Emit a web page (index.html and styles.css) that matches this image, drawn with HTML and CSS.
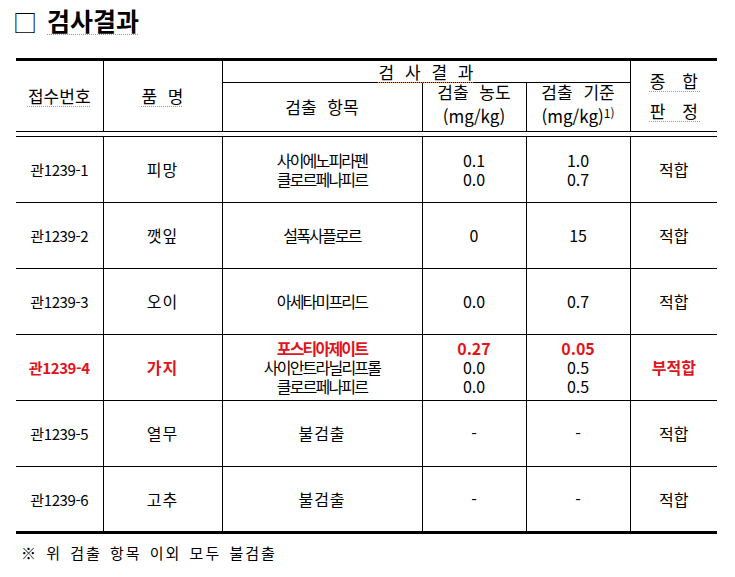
FILE: index.html
```html
<!DOCTYPE html>
<html lang="ko">
<head>
<meta charset="utf-8">
<title>검사결과</title>
<link rel="stylesheet" href="styles.css">
</head>
<body>
<h1 class="title"><span class="box">□</span><span class="sp">검사결과</span></h1>
<table class="result">
  <colgroup>
    <col class="c1"><col class="c2"><col class="c3"><col class="c4"><col class="c5"><col class="c6">
  </colgroup>
  <thead>
    <tr class="h1">
      <th rowspan="2" class="l"><span class="sp">접수번호</span></th>
      <th rowspan="2"><span class="sp">품 명</span></th>
      <th colspan="3" class="group"><span class="sp">검 사 결 과</span></th>
      <th rowspan="2" class="r judge"><span class="sp">종 합</span><br><span class="sp">판 정</span></th>
    </tr>
    <tr class="h2">
      <th>검출 항목</th>
      <th class="unit"><div class="lift">검출 농도<br>(mg/kg)</div></th>
      <th class="unit"><div class="lift">검출 기준<br>(mg/kg)<sup>1)</sup></div></th>
    </tr>
    <tr class="gap"><td colspan="6" class="l r"></td></tr>
  </thead>
  <tbody>
    <tr>
      <td class="l id">관1239-1</td><td class="name">피망</td>
      <td class="item">사이에노피라펜<br>클로르페나피르</td>
      <td class="val">0.1<br>0.0</td><td class="val">1.0<br>0.7</td>
      <td class="r ok">적합</td>
    </tr>
    <tr>
      <td class="l id">관1239-2</td><td class="name">깻잎</td>
      <td class="item">설폭사플로르</td>
      <td class="val">0</td><td class="val">15</td>
      <td class="r ok">적합</td>
    </tr>
    <tr>
      <td class="l id">관1239-3</td><td class="name">오이</td>
      <td class="item">아세타미프리드</td>
      <td class="val">0.0</td><td class="val">0.7</td>
      <td class="r ok">적합</td>
    </tr>
    <tr class="fail">
      <td class="l id red">관1239-4</td><td class="name red">가지</td>
      <td class="item"><span class="red">포스티아제이트</span><br>사이안트라닐리프롤<br>클로르페나피르</td>
      <td class="val"><span class="red">0.27</span><br>0.0<br>0.0</td>
      <td class="val"><span class="red">0.05</span><br>0.5<br>0.5</td>
      <td class="r ok red">부적합</td>
    </tr>
    <tr>
      <td class="l id">관1239-5</td><td class="name">열무</td>
      <td class="item wide">불검출</td>
      <td class="val">-</td><td class="val">-</td>
      <td class="r ok">적합</td>
    </tr>
    <tr>
      <td class="l id">관1239-6</td><td class="name">고추</td>
      <td class="item wide">불검출</td>
      <td class="val">-</td><td class="val">-</td>
      <td class="r ok">적합</td>
    </tr>
  </tbody>
</table>
<p class="note">※ 위 검출 항목 이외 모두 불검출</p>
</body>
</html>
```

FILE: styles.css
```css
* { box-sizing: border-box; }

body {
  margin: 0;
  background: #fff;
  color: #000;
  font-family: "Noto Sans CJK KR", "Noto Sans", sans-serif;
}

.title {
  margin: 0;
  height: 58px;
  padding: 5px 0 0 13px;
  display: flex;
  align-items: flex-start;
  gap: 10px;
  font-size: 25px;
  line-height: 31px;
  font-weight: 700;
  letter-spacing: 0;
}

.title .box {
  font-weight: 400;
  font-size: 24px;
  padding-top: 1px;
}

.sp {
  text-decoration: underline dotted #d98a3a;
  text-underline-offset: 3px;
  text-decoration-thickness: 1px;
}

.result {
  margin-left: 16px;
  width: 701px;
  border-collapse: collapse;
  table-layout: fixed;
}

.c1 { width: 87px; }
.c2 { width: 119px; }
.c3 { width: 200px; }
.c4 { width: 104px; }
.c5 { width: 104px; }
.c6 { width: 87px; }

.result th,
.result td {
  border: 1px solid #000;
  padding: 0;
  text-align: center;
  vertical-align: middle;
  font-weight: 400;
}

.result .l { border-left: none; }
.result .r { border-right: none; }

.result th {
  font-size: 17px;
  line-height: 20px;
  word-spacing: 6px;
}

.result .h1 th { border-top: 3px solid #000; }
.result .h1 { height: 23px; }
.result .h2 { height: 49px; }

.result th.group { line-height: 18px; }

.result th.judge {
  line-height: 30px;
  letter-spacing: 3px;
  word-spacing: 6px;
  padding-left: 3px;
}

.result th.unit {
  line-height: 24px;
}

.lift {
  margin-top: -6px;
}

.result th.unit sup {
  font-size: 12px;
  line-height: 0;
  vertical-align: 5px;
  letter-spacing: 0;
  word-spacing: 0;
}

.result .gap { height: 5px; }
.result .gap td { padding: 0; height: 5px; }

.result tbody tr { height: 66px; }
.result tbody tr:last-child td { border-bottom: 3px solid #000; }

.result td {
  font-size: 16px;
  line-height: 19px;
}

.result td.id {
  font-size: 15px;
  letter-spacing: -0.4px;
}

.result td.name { letter-spacing: 1px; }

.result td.item {
  font-size: 16px;
  letter-spacing: -1.8px;
}

.result td.item.wide { letter-spacing: 1px; }

.result .red {
  color: #e0141c;
  font-weight: 700;
}

.note {
  margin: 9px 0 0;
  padding-left: 21px;
  font-size: 15px;
  line-height: 20px;
  letter-spacing: 2px;
  word-spacing: 2px;
}
```
